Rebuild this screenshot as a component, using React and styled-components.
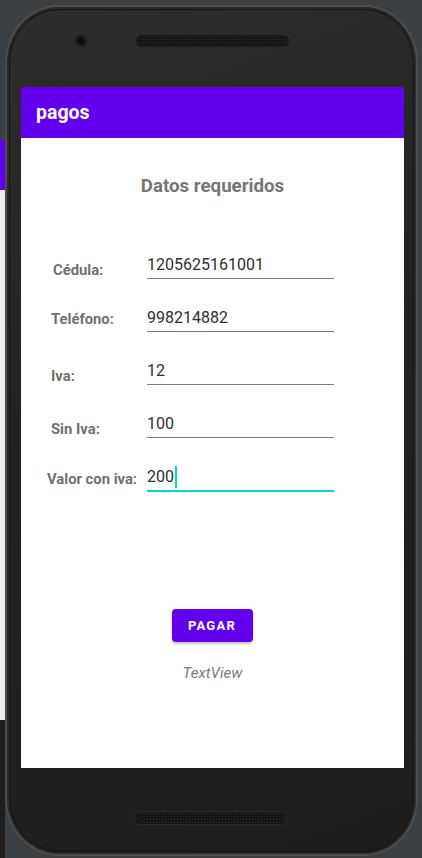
import React from "react";
import styled, { createGlobalStyle } from "styled-components";

const GlobalStyle = createGlobalStyle`
  html, body {
    margin: 0;
    padding: 0;
  }
  body {
    width: 422px;
    height: 858px;
    overflow: hidden;
    background-color: #3c3f41;
    background-image:
      linear-gradient(to bottom, #3c3f41 0 140px, #6200ee 140px 190px, #ededed 190px 720px, #1e1e1e 720px 858px);
    background-size: 5px 858px;
    background-repeat: no-repeat;
    font-family: Roboto, "Liberation Sans", sans-serif;
  }
`;

const Phone = styled.div`
  margin: 5px 0 0 5px;
  width: 413px;
  height: 851px;
  box-sizing: border-box;
  border: 2px solid #4d4d4d;
  border-radius: 54px / 58px;
  background: linear-gradient(160deg, #2d2d2d 0%, #222 45%, #1d1d1d 100%);
  box-shadow: inset 0 0 0 2px #2a2a2a, inset 0 0 0 3px #151515;
  display: flex;
  flex-direction: column;
`;

const TopBezel = styled.div`
  height: 80px;
  display: flex;
  align-items: flex-start;
  padding: 27px 0 0 67px;
  box-sizing: border-box;
  gap: 48px;
`;

const Camera = styled.div`
  width: 14px;
  height: 14px;
  border-radius: 50%;
  background: radial-gradient(circle at 50% 50%, #0b0b0b 0 3px, #1a1a1a 4px, #262626 7px);
  box-shadow: 0 0 0 1px #2c2c2c;
`;

const Speaker = styled.div`
  width: 153px;
  height: 12px;
  margin-top: ${(p) => p.$top ?? 1}px;
  border-radius: 6px;
  background-color: #161616;
  background-image: radial-gradient(circle, #2e2e2e 0.6px, transparent 0.9px);
  background-size: 3px 3px;
  box-shadow: 0 0 0 1px #2a2a2a;
`;

const Screen = styled.div`
  margin-left: 14px;
  width: 383px;
  height: 681px;
  background: #fff;
  display: flex;
  flex-direction: column;
`;

const AppBar = styled.div`
  height: 51px;
  background: #6200ee;
  display: flex;
  align-items: center;
  padding: 0 15px;
  color: #fff;
  font-size: 19.5px;
  font-weight: 700;
`;

const Content = styled.div`
  display: flex;
  flex-direction: column;
  align-items: stretch;
`;

const Heading = styled.h1`
  margin: 37px 0 0;
  font-size: 18.7px;
  line-height: 22px;
  font-weight: 700;
  color: #757575;
  text-align: center;
`;

const Form = styled.div`
  margin-top: 29px;
  display: flex;
  flex-direction: column;
`;

const Row = styled.div`
  height: ${(p) => p.$h || 53}px;
  display: grid;
  grid-template-columns: 126px 187px;
  align-items: end;
`;

const Label = styled.span`
  padding-left: ${(p) => p.$x}px;
  padding-bottom: ${(p) => p.$lift}px;
  font-size: 14.8px;
  line-height: 17px;
  font-weight: 700;
  color: #707070;
  white-space: nowrap;
`;

const Field = styled.div`
  height: 40px;
  box-sizing: border-box;
  display: flex;
  align-items: flex-end;
  padding-bottom: 4px;
  font-size: 16px;
  line-height: 19px;
  color: #2e2e2e;
  border-bottom: ${(p) => (p.$focused ? "2px solid #03dac5" : "1px solid #7a7a7a")};
`;

const Caret = styled.span`
  display: inline-block;
  width: 2px;
  height: 22px;
  margin-left: 1px;
  margin-bottom: -2px;
  background: #03dac5;
`;

const Actions = styled.div`
  margin-top: 117px;
  display: flex;
  flex-direction: column;
  align-items: center;
`;

const PayButton = styled.button`
  width: 81px;
  height: 33px;
  margin-left: -1px;
  border: none;
  border-radius: 4px;
  background: #6200ee;
  color: #fff;
  font-family: Roboto, "Liberation Sans", sans-serif;
  font-size: 13px;
  font-weight: 700;
  letter-spacing: 1.25px;
  box-shadow: 0 2px 3px rgba(0, 0, 0, 0.25);
`;

const Note = styled.span`
  margin-top: 23px;
  font-size: 15.2px;
  line-height: 17px;
  font-style: italic;
  color: #7c7c7c;
`;

const BottomBezel = styled.div`
  flex: 1;
  display: flex;
  justify-content: center;
  padding-top: 44px;
  padding-right: 3px;
`;

const fields = [
  { label: "Cédula:", value: "1205625161001", x: 32, lift: 0 },
  { label: "Teléfono:", value: "998214882", x: 30, lift: 4 },
  { label: "Iva:", value: "12", x: 30, lift: 0 },
  { label: "Sin Iva:", value: "100", x: 30, lift: 0 },
  { label: "Valor con iva:", value: "200", x: 26, lift: 4, focused: true, h: 54 },
];

export default function App() {
  return (
    <>
      <GlobalStyle />
      <Phone>
        <TopBezel>
          <Camera />
          <Speaker />
        </TopBezel>
        <Screen>
          <AppBar>pagos</AppBar>
          <Content>
            <Heading>Datos requeridos</Heading>
            <Form>
              {fields.map((f) => (
                <Row key={f.label} $h={f.h}>
                  <Label $x={f.x} $lift={f.lift}>
                    {f.label}
                  </Label>
                  <Field $focused={f.focused}>
                    {f.value}
                    {f.focused && <Caret />}
                  </Field>
                </Row>
              ))}
            </Form>
            <Actions>
              <PayButton>PAGAR</PayButton>
              <Note>TextView</Note>
            </Actions>
          </Content>
        </Screen>
        <BottomBezel>
          <Speaker $top={0} />
        </BottomBezel>
      </Phone>
    </>
  );
}
